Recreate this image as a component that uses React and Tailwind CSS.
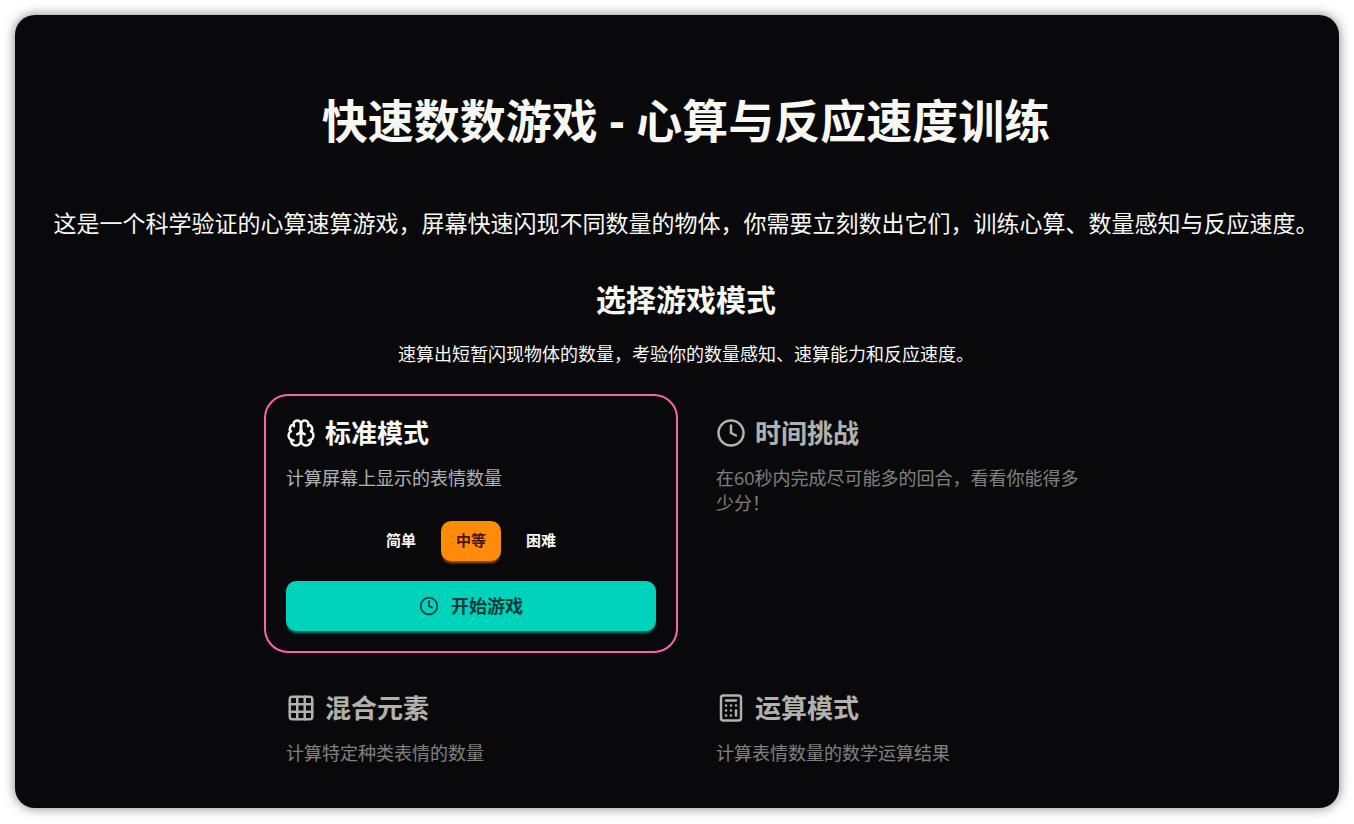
import { useState } from "react";
import { Calculator, Clock, Grid3x3 } from "lucide-react";

function BrainIcon({ size = 24 }) {
    return (
        <svg
            width={size}
            height={size}
            viewBox="0 0 24 24"
            fill="none"
            stroke="currentColor"
            strokeWidth="2"
            strokeLinecap="round"
            strokeLinejoin="round"
        >
            <path d="M12 5a3 3 0 1 0-5.997.125 4 4 0 0 0-2.526 5.77 4 4 0 0 0 .556 6.588A4 4 0 1 0 12 18Z" />
            <path d="M12 5a3 3 0 1 1 5.997.125 4 4 0 0 1 2.526 5.77 4 4 0 0 1-.556 6.588A4 4 0 1 1 12 18Z" />
            <path d="M15 13a4.5 4.5 0 0 1-3-4 4.5 4.5 0 0 1-3 4" />
            <path d="M17.599 6.5a3 3 0 0 0 .399-1.375" />
            <path d="M6.003 5.125A3 3 0 0 0 6.401 6.5" />
            <path d="M3.477 10.896a4 4 0 0 1 .585-.396" />
            <path d="M19.938 10.5a4 4 0 0 1 .585.396" />
            <path d="M6 18a4 4 0 0 1-1.967-.516" />
            <path d="M19.967 17.484A4 4 0 0 1 18 18" />
        </svg>
    );
}

const MODES = [
    { id: "standard", title: "标准模式", text: "计算屏幕上显示的表情数量", icon: BrainIcon },
    { id: "time", title: "时间挑战", text: "在60秒内完成尽可能多的回合，看看你能得多少分！", icon: Clock },
    { id: "mixed", title: "混合元素", text: "计算特定种类表情的数量", icon: Grid3x3 },
    { id: "math", title: "运算模式", text: "计算表情数量的数学运算结果", icon: Calculator },
];

const LEVELS = ["简单", "中等", "困难"];

function LevelPicker({ level, onChange }) {
    return (
        <div className="mt-[30px] flex justify-center gap-[10px]">
            {LEVELS.map((name) => (
                <button
                    key={name}
                    type="button"
                    onClick={() => onChange(name)}
                    className={`h-10 px-[15px] pb-[2px] rounded-[10px] text-[15px] font-bold ${
                        level === name
                            ? "bg-[#ff8b0a] text-[#4d1106] shadow-[0_3px_2px_-1px_rgba(255,139,10,0.4),0_4px_3px_-2px_rgba(255,139,10,0.3)]"
                            : "text-[#f8f8f2]"
                    }`}
                >
                    {name}
                </button>
            ))}
        </div>
    );
}

function ModeCard({ mode, active, onSelect, level, onLevel }) {
    const Icon = mode.icon;
    return (
        <div
            onClick={onSelect}
            className={`rounded-3xl border-2 p-5 ${active ? "border-[#fd62b2]" : "border-transparent opacity-70"}`}
        >
            <h3 className="flex items-center gap-[9px] text-[26px] leading-[34px] font-bold">
                <Icon size={30} />
                {mode.title}
            </h3>
            <p className="mt-4 text-lg leading-[25px] opacity-70">{mode.text}</p>
            {active ? (
                <>
                    <LevelPicker level={level} onChange={onLevel} />
                    <button
                        type="button"
                        className="mt-5 flex h-[50px] w-full items-center justify-center gap-3 rounded-[10px] bg-[#00d3bb] text-lg font-bold text-[#063b3b] shadow-[0_3px_2px_-1px_rgba(0,211,187,0.4),0_4px_3px_-2px_rgba(0,211,187,0.3)]"
                    >
                        <Clock size={20} />
                        开始游戏
                    </button>
                </>
            ) : null}
        </div>
    );
}

export default function App() {
    const [selected, setSelected] = useState("standard");
    const [level, setLevel] = useState("中等");

    return (
        <div className="min-h-screen bg-white p-[15px] font-['Open_Sans','Noto_Sans_CJK_SC',sans-serif]">
            <main className="rounded-[20px] bg-[#09090b] pt-[70px] pr-4 pb-5 pl-[34px] text-[#f8f8f2] shadow-[0_0_12px_rgba(0,0,0,0.5)]">
                <h1 className="text-center text-[46px] leading-[70px] font-bold">快速数数游戏 - 心算与反应速度训练</h1>
                <p className="mt-[51px] text-center text-[23px] leading-[34px]">
                    这是一个科学验证的心算速算游戏，屏幕快速闪现不同数量的物体，你需要立刻数出它们，训练心算、数量感知与反应速度。
                </p>
                <h2 className="mt-[38px] text-center text-[30px] leading-[44px] font-bold">选择游戏模式</h2>
                <p className="mt-5 text-center text-lg leading-[25px]">
                    速算出短暂闪现物体的数量，考验你的数量感知、速算能力和反应速度。
                </p>
                <div className="mx-auto mt-[27px] grid max-w-[844px] grid-cols-2 gap-4">
                    {MODES.map((mode) => (
                        <ModeCard
                            key={mode.id}
                            mode={mode}
                            active={selected === mode.id}
                            onSelect={() => setSelected(mode.id)}
                            level={level}
                            onLevel={setLevel}
                        />
                    ))}
                </div>
            </main>
        </div>
    );
}
